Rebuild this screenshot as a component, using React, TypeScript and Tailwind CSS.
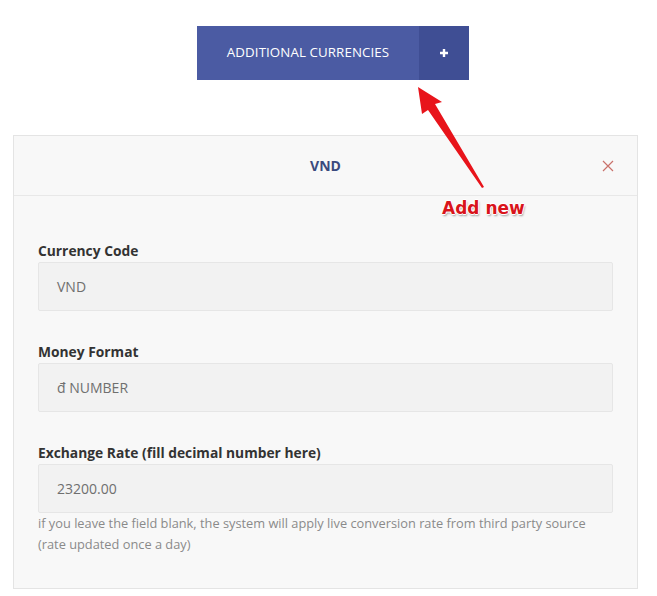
import React from 'react';

const fields = [
  { label: 'Currency Code', value: 'VND' },
  { label: 'Money Format', value: 'đ NUMBER' },
  { label: 'Exchange Rate (fill decimal number here)', value: '23200.00' },
];

const App: React.FC = () => {
  return (
    <div className="relative w-[657px] h-[596px] bg-white font-['Open_Sans',sans-serif] overflow-hidden">
      {/* Add currency button */}
      <div className="pt-[26px] pl-[197px]">
        <div className="flex h-[54px] w-[272px] text-white">
          <div className="flex w-[222px] items-center justify-center bg-[#4b5ba3] text-[13.3px] tracking-[0.1px]">
            ADDITIONAL CURRENCIES
          </div>
          <div className="flex w-[50px] items-center justify-center bg-[#3f4e94]">
            <svg width="10" height="10" viewBox="0 0 10 10">
              <path d="M5 1v8M1 5h8" stroke="#fff" strokeWidth="2.4" />
            </svg>
          </div>
        </div>
      </div>

      {/* Currency panel */}
      <div className="mt-[55px] ml-[13px] w-[625px] border border-[#e4e4e4] bg-[#f8f8f8]">
        <div className="relative flex h-[60px] items-center justify-center border-b border-[#e8e8e8]">
          <span className="text-[14px] font-bold text-[#3b4a7e]">VND</span>
          <svg className="absolute right-[23px] top-[24px]" width="12" height="12" viewBox="0 0 12 12">
            <path d="M1 1l10 10M11 1L1 11" stroke="#c9716b" strokeWidth="1.2" />
          </svg>
        </div>
        <div className="px-[24px] pt-[45px] pb-[33px]">
          {fields.map((f, i) => (
            <div key={f.label} className={i > 0 ? 'mt-[31px]' : ''}>
              <div className="text-[13.8px] leading-[20px] font-bold text-[#333]">{f.label}</div>
              <div className="mt-[1px] flex h-[49px] items-center rounded-[2px] border border-[#e6e6e6] bg-[#f2f2f2] pl-[18px] text-[14px] text-[#6f6f6f]">
                {f.value}
              </div>
            </div>
          ))}
          <p className="text-[12.8px] leading-[21px] text-[#8a8a8a]">
            if you leave the field blank, the system will apply live conversion rate from third party source
            <br />
            (rate updated once a day)
          </p>
        </div>
      </div>

      {/* Annotation */}
      <svg className="absolute left-0 top-0" width="657" height="596" viewBox="0 0 657 596">
        <path d="M418 87 L442 102 L435 104 L484 187 L482 188 L428 110 L422 114 Z" fill="#e8141b" />
      </svg>
      <div
        className="absolute left-[442px] top-[196px] font-['DejaVu_Sans',sans-serif] text-[17px] leading-[24px] font-bold text-[#d9141b] [text-shadow:1px_0_0_#fff,-1px_0_0_#fff,0_1px_0_#fff,0_-1px_0_#fff,1px_2px_2px_rgba(0,0,0,0.35)]"
      >
        Add new
      </div>
    </div>
  );
};

export default App;
